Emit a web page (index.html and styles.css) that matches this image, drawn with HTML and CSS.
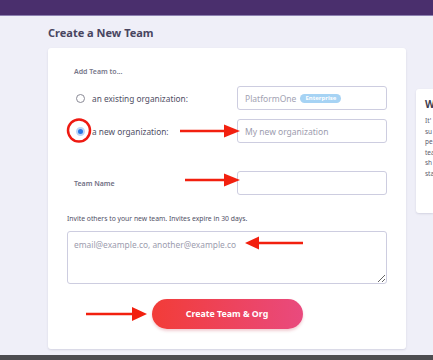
FILE: index.html
```html
<!DOCTYPE html>
<html lang="en">
<head>
    <meta charset="UTF-8">
    <title>Create a New Team</title>
    <link rel="stylesheet" href="styles.css">
</head>
<body>
    <div class="topbar"></div>
    <div class="page">
        <div class="main">
            <h1 class="title">Create a New Team</h1>
            <div class="card">
                <div class="intro">Add Team to...</div>

                <div class="row first">
                    <label class="choice"><span class="radio"></span>an existing organization:</label>
                    <div class="field">PlatformOne <span class="badge">Enterprise</span></div>
                </div>

                <div class="row">
                    <label class="choice"><span class="radio checked"></span>a new organization:</label>
                    <input class="field" type="text" placeholder="My new organization">
                </div>

                <div class="row team">
                    <label class="label">Team Name</label>
                    <input class="field" type="text">
                </div>

                <p class="hint">Invite others to your new team. Invites expire in 30 days.</p>
                <textarea class="emails" placeholder="email@example.co, another@example.co"></textarea>

                <div class="actions">
                    <button class="create">Create Team &amp; Org</button>
                </div>
            </div>
        </div>

        <div class="side">
            <h2>W</h2>
            <p>It'<br>su<br>pe<br>tea<br>sh<br>sta</p>
        </div>
    </div>
    <div class="bottombar"></div>

    <!-- annotations drawn over the screenshot -->
    <svg class="marks" width="433" height="360" viewBox="0 0 433 360">
        <circle cx="79" cy="130.5" r="11" fill="none" stroke="#ee1a12" stroke-width="2.5"/>
        <g fill="#f2200f" stroke="#f2200f">
            <line x1="180" y1="131" x2="226" y2="131" stroke-width="2.5"/>
            <polygon points="224,124.5 240,131 224,137.5" stroke="none"/>
            <line x1="185" y1="180" x2="226" y2="180" stroke-width="2.5"/>
            <polygon points="224,173.5 240,180 224,186.5" stroke="none"/>
            <line x1="303" y1="243" x2="257" y2="243" stroke-width="2.5"/>
            <polygon points="259,236.5 245,243 259,249.5" stroke="none"/>
            <line x1="86" y1="314" x2="134" y2="314" stroke-width="2.5"/>
            <polygon points="132,307 147,314 132,321" stroke="none"/>
        </g>
    </svg>
</body>
</html>
```

FILE: styles.css
```css
body {
    margin: 0;
    width: 433px;
    height: 360px;
    overflow: hidden;
    background: #efeff8;
    font-family: "Noto Sans", Arial, sans-serif;
    color: #4f4d60;
}

.topbar {
    height: 15px;
    background: #4a2f6d;
    border-bottom: 1px solid #8c80b0;
}

.page {
    display: flex;
    gap: 10px;
    padding-left: 48px;
    height: 339px;
}

.main {
    width: 358px;
    flex-shrink: 0;
}

.title {
    margin: 0;
    height: 32px;
    line-height: 33px;
    font-size: 11px;
    font-weight: 700;
    color: #484560;
}

.card {
    box-sizing: border-box;
    height: 301px;
    padding: 19px 19px 0;
    background: #fff;
    border-radius: 3px;
    box-shadow: 0 1px 2px rgba(60, 60, 100, 0.15);
}

.intro {
    margin-left: 7px;
    height: 10px;
    line-height: 10px;
    font-size: 7px;
    font-weight: 600;
    color: #77778a;
}

.row {
    display: grid;
    grid-template-columns: 170px 150px;
    align-items: center;
    margin-top: 9px;
}

.row.team {
    margin-top: 28px;
}

.choice {
    display: flex;
    align-items: center;
    gap: 7px;
    padding-left: 9px;
    font-size: 8.3px;
    color: #4f4e64;
}

.radio {
    box-sizing: border-box;
    width: 9px;
    height: 9px;
    border-radius: 50%;
    border: 1px solid #8a8a96;
    background: #fff;
}

.radio.checked {
    border: 2px solid #bcd6f7;
    background: #2b78e4;
    box-shadow: 0 0 0 1px #2b78e4 inset;
}

.label {
    padding-left: 7px;
    font-size: 7px;
    font-weight: 600;
    color: #6f6e82;
}

.field {
    box-sizing: border-box;
    display: flex;
    align-items: center;
    gap: 4px;
    height: 24px;
    padding: 0 7px;
    border: 1px solid #cdcde0;
    border-radius: 3px;
    background: #fff;
    font-family: inherit;
    font-size: 8.5px;
    color: #a2a2b2;
    outline: none;
}

.field::placeholder,
.emails::placeholder {
    color: #9c9cae;
}

.badge {
    display: inline-block;
    padding: 0 5px;
    height: 9px;
    line-height: 9px;
    border-radius: 5px;
    background: #a6d3f4;
    color: #fff;
    font-size: 6px;
    font-weight: 700;
}

.hint {
    margin: 19px 0 0;
    height: 10px;
    line-height: 10px;
    font-size: 6.8px;
    color: #4f4e64;
}

.emails {
    display: block;
    box-sizing: border-box;
    width: 320px;
    height: 53px;
    margin-top: 7px;
    padding: 7px 6px;
    border: 1px solid #cdcde0;
    border-radius: 3px;
    font-family: inherit;
    font-size: 8.4px;
    outline: none;
}

.actions {
    display: flex;
    justify-content: center;
    margin-top: 15px;
}

.create {
    width: 151px;
    height: 30px;
    border: none;
    border-radius: 15px;
    background: linear-gradient(90deg, #f23c38, #e94a7e);
    box-shadow: 0 2px 3px rgba(200, 60, 80, 0.25);
    color: #fff;
    font-family: inherit;
    font-size: 8.8px;
    font-weight: 700;
    cursor: pointer;
}

.side {
    margin-top: 73px;
    box-sizing: border-box;
    width: 17px;
    height: 124px;
    flex-shrink: 0;
    padding: 8px 0 0 9px;
    background: #fff;
    border-radius: 3px 0 0 3px;
    box-shadow: 0 1px 2px rgba(60, 60, 100, 0.15);
    white-space: nowrap;
    overflow: hidden;
}

.side h2 {
    margin: 0;
    font-size: 10px;
    font-weight: 700;
    color: #3e3c50;
}

.side p {
    margin: 5px 0 0;
    font-size: 6.5px;
    line-height: 10.5px;
    color: #5a596c;
}

.bottombar {
    height: 5px;
    background: #4c4c50;
}

.marks {
    position: absolute;
    left: 0;
    top: 0;
    pointer-events: none;
}
```
